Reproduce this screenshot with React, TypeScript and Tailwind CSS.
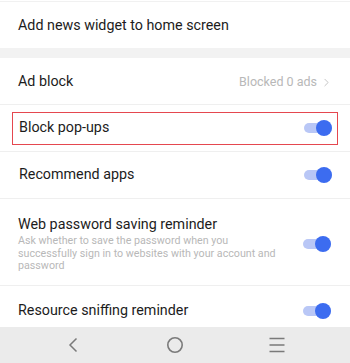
import { ChevronRight } from 'lucide-react';

function Toggle() {
  return (
    <div className="relative w-[28px] h-[16px] flex items-center">
      <div className="w-full h-[10px] rounded-full bg-[#b9c7f6]" />
      <div className="absolute right-0 top-0 w-[16px] h-[16px] rounded-full bg-[#3c6cf0]" />
    </div>
  );
}

function ToggleRow({ label, highlight }: { label: string; highlight?: boolean }) {
  return (
    <div className="h-[47px] px-[12px] flex items-center border-b border-[#efefef]">
      <div
        className={
          'flex-1 h-[33px] flex items-center justify-between pl-[6px] pr-[5px] ' +
          (highlight ? 'border border-[#e5474f]' : 'border border-transparent')
        }
      >
        <span className="text-[14.3px] text-[#1c1c1c]">{label}</span>
        <Toggle />
      </div>
    </div>
  );
}

export default function App() {
  return (
    <div className="w-[350px] h-[363px] flex flex-col bg-white overflow-hidden" style={{ fontFamily: 'Roboto, "Noto Sans", sans-serif' }}>
      <div className="flex-1 overflow-hidden">
        <div className="mt-px border-t border-[#f1f1f1] h-[47px] px-[18px] pt-[2px] flex items-center">
          <span className="text-[14.3px] text-[#1c1c1c]">Add news widget to home screen</span>
        </div>
        <div className="h-[10px] bg-[#f2f2f2]" />
        <div className="h-[47px] px-[18px] pt-[2px] flex items-center justify-between border-b border-[#efefef]">
          <span className="text-[14.3px] text-[#1c1c1c]">Ad block</span>
          <span className="flex items-center text-[12.5px] text-[#b8b8b8]">
            Blocked 0 ads
            <ChevronRight className="w-[13px] h-[13px] ml-[3px] -mr-[1px]" strokeWidth={1.5} />
          </span>
        </div>
        <ToggleRow label="Block pop-ups" highlight />
        <ToggleRow label="Recommend apps" />
        <div className="h-[87px] pl-[18px] pr-[19px] pt-[4px] flex items-center justify-between border-b border-[#efefef]">
          <div className="w-[272px]">
            <div className="text-[14.3px] text-[#1c1c1c] leading-[18px]">Web password saving reminder</div>
            <div className="text-[10.7px] text-[#b8b8b8] leading-[12.6px] mt-[2px]">
              Ask whether to save the password when you successfully sign in to websites with your account and password
            </div>
          </div>
          <Toggle />
        </div>
        <div className="h-[48px] pl-[18px] pr-[19px] pt-[1px] flex items-center justify-between">
          <span className="text-[14.3px] text-[#1c1c1c]">Resource sniffing reminder</span>
          <Toggle />
        </div>
      </div>
      <div className="h-[36px] bg-[#ebebeb] flex justify-center items-center gap-[82px] text-[#7a7a7a]">
        <div className="w-[20px] flex justify-center">
          <svg width="12" height="16" viewBox="0 0 12 16" fill="none" stroke="currentColor" strokeWidth="1.5">
            <path d="M9.5 1.5 L3 8 L9.5 14.5" />
          </svg>
        </div>
        <div className="w-[20px] flex justify-center">
          <svg width="18" height="18" viewBox="0 0 18 18" fill="none" stroke="currentColor" strokeWidth="1.6">
            <circle cx="9" cy="9" r="7.2" />
          </svg>
        </div>
        <div className="w-[20px] flex justify-center">
          <svg width="16" height="16" viewBox="0 0 16 16" fill="none" stroke="currentColor" strokeWidth="1.5">
            <path d="M0.5 1.5 H15.5 M0.5 8 H15.5 M0.5 14.5 H15.5" />
          </svg>
        </div>
      </div>
    </div>
  );
}
